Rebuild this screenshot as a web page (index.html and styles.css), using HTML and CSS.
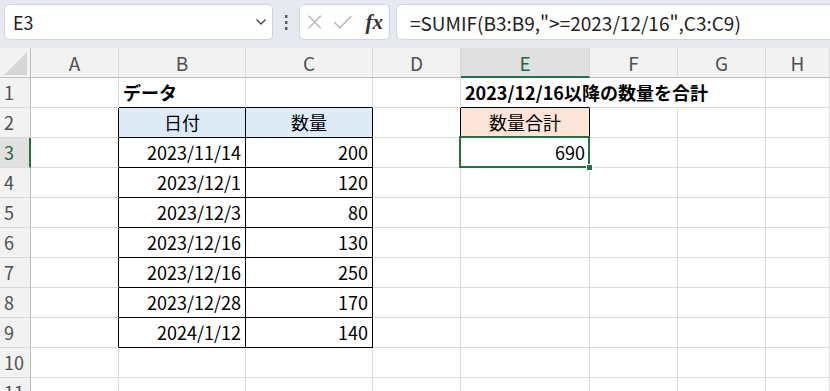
FILE: index.html
```html
<!DOCTYPE html>
<html lang="ja">
<head>
    <meta charset="UTF-8">
    <meta name="viewport" content="width=device-width, initial-scale=1.0">
    <title>SUMIF</title>
    <link rel="stylesheet" href="styles.css">
</head>
<body>
    <!-- Barra de fórmulas -->
    <div class="formula-bar">
        <div class="name-box">
            <span>E3</span>
            <svg class="chevron" width="12" height="8" viewBox="0 0 12 8"><polyline points="1.5,1.5 6,6 10.5,1.5" fill="none" stroke="#444" stroke-width="1.3"/></svg>
        </div>
        <svg class="grip" width="4" height="16" viewBox="0 0 4 16"><rect x="1" y="1" width="2.4" height="3" fill="#555"/><rect x="1" y="7" width="2.4" height="3" fill="#555"/><rect x="1" y="13" width="2.4" height="3" fill="#555"/></svg>
        <div class="fx-box">
            <svg width="16" height="16" viewBox="0 0 16 16"><path d="M1.5 1.5 L14.5 14.5 M14.5 1.5 L1.5 14.5" stroke="#b4b4b4" stroke-width="1.3"/></svg>
            <svg width="20" height="16" viewBox="0 0 20 16"><polyline points="1,8 7,14 19,2" fill="none" stroke="#b4b4b4" stroke-width="1.3"/></svg>
            <span class="fx">fx</span>
        </div>
        <div class="formula-box">=SUMIF(B3:B9,"&gt;=2023/12/16",C3:C9)</div>
    </div>

    <!-- Hoja -->
    <div class="sheet">
        <div class="corner"><svg width="23" height="23" viewBox="0 0 23 23"><polygon points="23,0 23,23 0,23" fill="#d6d6d6"/></svg></div>
        <div class="col-head">A</div>
        <div class="col-head">B</div>
        <div class="col-head">C</div>
        <div class="col-head">D</div>
        <div class="col-head active">E</div>
        <div class="col-head">F</div>
        <div class="col-head">G</div>
        <div class="col-head">H</div>

        <!-- fila 1 -->
        <div class="row-head">1</div>
        <div class="cell"></div>
        <div class="cell title edge-b">データ</div>
        <div class="cell edge-b"></div>
        <div class="cell"></div>
        <div class="cell title spill edge-b">2023/12/16以降の数量を合計</div>
        <div class="cell spill"></div>
        <div class="cell"></div>
        <div class="cell"></div>

        <!-- fila 2 -->
        <div class="row-head">2</div>
        <div class="cell edge-r"></div>
        <div class="cell tb th-blue">日付</div>
        <div class="cell tb th-blue">数量</div>
        <div class="cell edge-r"></div>
        <div class="cell tb th-orange">数量合計</div>
        <div class="cell"></div>
        <div class="cell"></div>
        <div class="cell"></div>

        <!-- fila 3 -->
        <div class="row-head active">3</div>
        <div class="cell edge-r"></div>
        <div class="cell tb num">2023/11/14</div>
        <div class="cell tb num">200</div>
        <div class="cell"></div>
        <div class="cell num selected">690</div>
        <div class="cell"></div>
        <div class="cell"></div>
        <div class="cell"></div>

        <!-- fila 4 -->
        <div class="row-head">4</div>
        <div class="cell edge-r"></div>
        <div class="cell tb num">2023/12/1</div>
        <div class="cell tb num">120</div>
        <div class="cell"></div>
        <div class="cell"></div>
        <div class="cell"></div>
        <div class="cell"></div>
        <div class="cell"></div>

        <!-- fila 5 -->
        <div class="row-head">5</div>
        <div class="cell edge-r"></div>
        <div class="cell tb num">2023/12/3</div>
        <div class="cell tb num">80</div>
        <div class="cell"></div>
        <div class="cell"></div>
        <div class="cell"></div>
        <div class="cell"></div>
        <div class="cell"></div>

        <!-- fila 6 -->
        <div class="row-head">6</div>
        <div class="cell edge-r"></div>
        <div class="cell tb num">2023/12/16</div>
        <div class="cell tb num">130</div>
        <div class="cell"></div>
        <div class="cell"></div>
        <div class="cell"></div>
        <div class="cell"></div>
        <div class="cell"></div>

        <!-- fila 7 -->
        <div class="row-head">7</div>
        <div class="cell edge-r"></div>
        <div class="cell tb num">2023/12/16</div>
        <div class="cell tb num">250</div>
        <div class="cell"></div>
        <div class="cell"></div>
        <div class="cell"></div>
        <div class="cell"></div>
        <div class="cell"></div>

        <!-- fila 8 -->
        <div class="row-head">8</div>
        <div class="cell edge-r"></div>
        <div class="cell tb num">2023/12/28</div>
        <div class="cell tb num">170</div>
        <div class="cell"></div>
        <div class="cell"></div>
        <div class="cell"></div>
        <div class="cell"></div>
        <div class="cell"></div>

        <!-- fila 9 -->
        <div class="row-head">9</div>
        <div class="cell edge-r"></div>
        <div class="cell tb num">2024/1/12</div>
        <div class="cell tb num">140</div>
        <div class="cell"></div>
        <div class="cell"></div>
        <div class="cell"></div>
        <div class="cell"></div>
        <div class="cell"></div>

        <!-- fila 10 -->
        <div class="row-head">10</div>
        <div class="cell"></div>
        <div class="cell"></div>
        <div class="cell"></div>
        <div class="cell"></div>
        <div class="cell"></div>
        <div class="cell"></div>
        <div class="cell"></div>
        <div class="cell"></div>

        <!-- fila 11 -->
        <div class="row-head">11</div>
        <div class="cell"></div>
        <div class="cell"></div>
        <div class="cell"></div>
        <div class="cell"></div>
        <div class="cell"></div>
        <div class="cell"></div>
        <div class="cell"></div>
        <div class="cell"></div>
    </div>
</body>
</html>
```

FILE: styles.css
```css
body {
    margin: 0;
    width: 830px;
    height: 391px;
    overflow: hidden;
    font-family: "Noto Sans CJK JP", "Noto Sans", sans-serif;
    color: #000;
    background-color: white;
}

/* Barra de fórmulas */
.formula-bar {
    display: flex;
    align-items: flex-start;
    height: 48px;
    padding: 4px 0 0 4px;
    box-sizing: border-box;
    background-color: #e6e9ef;
}

.name-box,
.fx-box,
.formula-box {
    height: 36px;
    box-sizing: border-box;
    background-color: white;
    border: 1px solid #d2d4d8;
    border-radius: 5px;
    display: flex;
    align-items: center;
}

.name-box {
    width: 269px;
    padding: 0 5px 0 8px;
    justify-content: space-between;
    font-size: 18px;
    color: #222;
}

.grip {
    margin: 10px 11px 0 11px;
}

.fx-box {
    width: 91px;
    padding: 0 6px 0 7px;
    gap: 11px;
}

.fx {
    font-family: "Liberation Serif", serif;
    font-style: italic;
    font-weight: bold;
    font-size: 21px;
    color: #333;
    margin-left: 2px;
}

.formula-box {
    flex: 1;
    margin-left: 6px;
    padding-left: 13px;
    border-right: none;
    border-radius: 5px 0 0 5px;
    font-size: 19px;
    color: #222;
    white-space: nowrap;
}

/* Hoja */
.sheet {
    display: grid;
    grid-template-columns: 31px 88px 127px 127px 88px 129px 88px 88px 1fr;
    grid-auto-rows: 30px;
}

.corner,
.col-head,
.row-head,
.cell {
    box-sizing: border-box;
    border-right: 1px solid #dadada;
    border-bottom: 1px solid #dadada;
    white-space: nowrap;
}

.corner {
    background-color: #f2f2f2;
    border-right-color: #bfbfbf;
    border-bottom-color: #bfbfbf;
    display: flex;
    align-items: flex-end;
    justify-content: flex-end;
    padding: 0 3px 2px 0;
}

.col-head {
    background-color: #f2f2f2;
    border-right-color: #d8d8d8;
    border-bottom-color: #bfbfbf;
    text-align: center;
    font-size: 19px;
    line-height: 29px;
    color: #505050;
}

.col-head.active {
    background-color: #e0e0e0;
    color: #1d6b3f;
    border-bottom: 2px solid #217346;
}

.row-head {
    background-color: #f2f2f2;
    border-right-color: #bfbfbf;
    border-bottom-color: #d8d8d8;
    padding-left: 4px;
    font-size: 18px;
    line-height: 29px;
    color: #505050;
}

.row-head.active {
    background-color: #e0e0e0;
    color: #1d6b3f;
    border-right: 2px solid #217346;
}

.cell {
    font-size: 18px;
    line-height: 29px;
    padding: 0 4px;
}

.title {
    font-weight: bold;
}

.num {
    text-align: right;
}

/* Tabla */
.tb {
    border-right-color: #000;
    border-bottom-color: #000;
}

.th-blue {
    background-color: #ddebf7;
    text-align: center;
}

.th-orange {
    background-color: #fce4d6;
    text-align: center;
}

.edge-r {
    border-right-color: #000;
}

.edge-b {
    border-bottom-color: #000;
}

.spill {
    border-right-color: transparent;
}

/* Celda seleccionada */
.selected {
    position: relative;
}

.selected::before {
    content: "";
    position: absolute;
    left: -2px;
    top: -2px;
    right: -1px;
    bottom: -1px;
    border: 2px solid #217346;
}

.selected::after {
    content: "";
    position: absolute;
    right: -4px;
    bottom: -4px;
    width: 5px;
    height: 5px;
    background-color: #217346;
    border: 1px solid white;
}
```
